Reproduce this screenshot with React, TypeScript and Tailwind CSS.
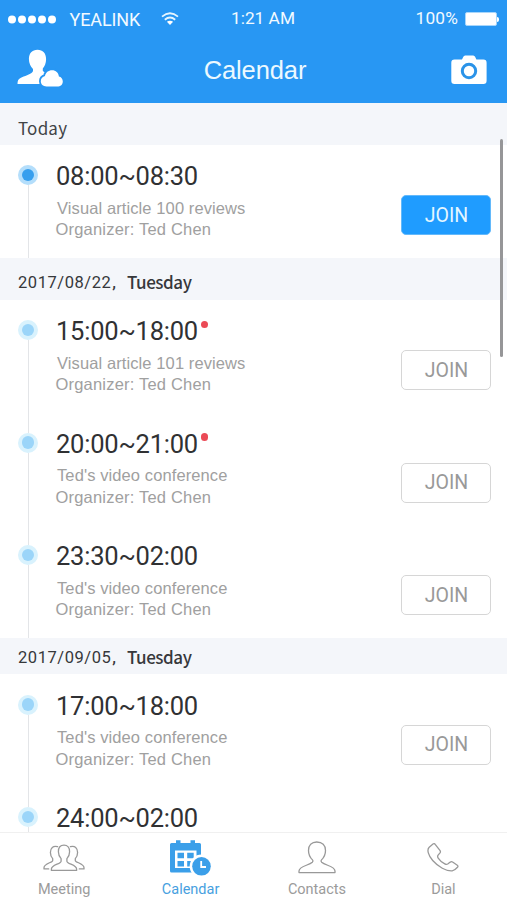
import React from "react";

const roboto = "font-['Roboto','Liberation_Sans',sans-serif]";
const arial = "font-['Liberation_Sans',sans-serif]";
const noto = "font-['Noto_Sans_CJK_SC','Noto_Sans',sans-serif]";

type Meeting = {
  time: string;
  title?: string;
  live?: boolean;
  unread?: boolean;
};

function Wifi() {
  return (
    <svg width="18" height="14" viewBox="0 0 18 14" fill="none" stroke="#e6f6ff">
      <path d="M1 4.6Q9-2 17 4.6" strokeWidth="1.8" />
      <path d="M3.8 7.7Q9 3.4 14.2 7.7" strokeWidth="1.8" />
      <path d="M5.9 9.8Q9 7.6 12.1 9.8L9 13Z" fill="#fff" stroke="none" />
    </svg>
  );
}

function StatusBar() {
  return (
    <div className={`flex h-[38px] items-center text-[#f2faff] ${roboto}`}>
      <svg className="ml-[8px]" width="48" height="9" viewBox="0 0 48 9" fill="#fff">
        <circle cx="4" cy="4.500" r="4" />
        <circle cx="14" cy="4.500" r="4" />
        <circle cx="24" cy="4.500" r="4" />
        <circle cx="34" cy="4.500" r="4" />
        <circle cx="44" cy="4.500" r="4" />
      </svg>
      <span className="ml-[13.5px] mt-[1px] w-[72px] text-[18px] tracking-[-0.1px]">YEALINK</span>
      <span className="ml-[19px] w-[18px]">
        <Wifi />
      </span>
      <span className="ml-[52.5px] w-[66px] text-[17.3px]">1:21 AM</span>
      <span className="ml-[118.5px] w-[44px] text-[17.3px] tracking-[0.2px]">100%</span>
      <span className="ml-[5px] h-[14px] w-[32px] rounded-[2px] border border-[#a8d6fb] bg-white" />
      <span className="h-[5px] w-[2.5px] rounded-r-full bg-white" />
    </div>
  );
}

function Header() {
  return (
    <header className="h-[103px] shrink-0 bg-[#2897f3]">
      <StatusBar />
      <div className="flex h-[65px] items-start justify-between pl-[17px] pr-[20px]">
        <svg className="mt-[11px]" width="46" height="39" viewBox="0 0 46 39">
          <path
            d="M20.5 .8c5.400 0 8.600 3.700 8.600 9.200 0 4.400-1.600 7.600-3.300 9.500v2.300c0 1.200 4.200 1.600 8.200 4.200V35H.5c0-3 .6-4.700 3-5.900 3.900-2 9.600-3.500 12-6 .7-.8.700-2.200.3-3.300-2-1.900-3.900-5.400-3.900-9.800 0-5.500 3.200-9.200 8.600-9.200Z"
            fill="#fff"
          />
          <path
            d="M29.500 37.500h10.700c3.400 0 5.600-2.100 5.600-5.100 0-2.700-1.600-4.500-3.900-5-.6-3.800-3-6.100-6.800-6.100-3.800 0-6.500 2.300-7.100 5.800-2.300.6-4.200 2.400-4.200 5.200 0 3.100 2.200 5.200 5.700 5.200Z"
            fill="#fff"
            stroke="#2897f3"
            strokeWidth="3.600"
            paintOrder="stroke"
          />
        </svg>
        <h1 className={`mr-[4px] mt-[16px] text-[25.5px] leading-[32px] tracking-[-0.1px] text-[#ecf9ff] ${arial}`}>Calendar</h1>
        <svg className="mt-[17px]" width="36" height="30" viewBox="0 0 36 30">
          <path
            d="M3.500 4.500H11l1.200-2.600Q12.800.4 14.200.4h8q1.400 0 2 1.500l1.200 2.600h7q3.200 0 3.200 3.200v18q0 3.200-3.200 3.200H3.500Q.3 28.900.3 25.700v-18q0-3.200 3.200-3.200Z"
            fill="#fff"
          />
          <circle cx="18" cy="16" r="6.700" fill="#fff" stroke="#2b93e8" strokeWidth="3" />
        </svg>
      </div>
    </header>
  );
}

function Today() {
  return (
    <div className={`flex h-[42px] shrink-0 items-center bg-[#f4f6fa] pl-[18px] pt-[8px] text-[17px] tracking-[0.2px] text-[#414346] ${noto}`}>
      Today
    </div>
  );
}

function DateBar({ date, day, tall }: { date: string; day: string; tall?: boolean }) {
  return (
    <div className={`flex shrink-0 items-center bg-[#f4f6fa] pl-[18px] text-[#36383b] ${tall ? "h-[42px] pt-[8px]" : "h-[36px] pt-[4px]"}`}>
      <span className={`w-[109px] whitespace-nowrap text-[16.500px] leading-[20px] tracking-[0.550px] ${roboto}`}>
        {date}
        <span className="ml-[1px] font-medium">,</span>
      </span>
      <span className={`-mt-[2px] text-[17px] font-medium leading-[24px] tracking-[-0.450px] ${noto}`}>{day}</span>
    </div>
  );
}

function MeetingRow({ time, title, live, unread, first }: Meeting & { first: boolean }) {
  return (
    <div className={`flex ${title ? "min-h-[112.600px]" : ""}`}>
      <div className="ml-[18px] flex w-[20px] flex-col items-center">
        <div className={`h-[20px] w-[1px] ${first ? "" : "bg-[#e3e5e8]"}`} />
        <span className={`flex h-[20px] w-[20px] shrink-0 items-center justify-center rounded-full ${live ? "bg-[#b4defb]" : "bg-[#d9f2fd]"}`}>
          <span className={`h-[12.500px] w-[12.500px] rounded-full ${live ? "bg-[#379fee]" : "bg-[#9bd5f9]"}`} />
        </span>
        <div className="w-[1px] flex-1 bg-[#e3e5e8]" />
      </div>
      <div className="ml-[18px] flex-1 pt-[16px]">
        <div className={`flex h-[30px] text-[25.500px] leading-[31px] tracking-[-0.220px] text-[#303133] ${roboto}`}>
          {time}
          {unread && <span className="ml-[3px] mt-[4.500px] h-[7.500px] w-[7.500px] rounded-full bg-[#eb4a56]" />}
        </div>
        {title && (
          <>
            <p className={`ml-[1px] mt-[6.700px] text-[16.500px] leading-[21.500px] tracking-[0.100px] text-[#a0a0a0] ${arial}`}>{title}</p>
            <p className={`-ml-[0.500px] text-[16.500px] leading-[21.500px] tracking-[0.200px] text-[#a0a0a0] ${arial}`}>Organizer: Ted Chen</p>
          </>
        )}
      </div>
      {title && (
        <button
          className={`mr-[16px] mt-[50px] flex h-[40px] w-[90px] items-center justify-center rounded-[5px] pl-[1px] pt-[1px] text-[19.500px] ${roboto} ${
            live ? "border border-[#63b9fb] bg-[#1f9cff] text-[#e4f6ff]" : "border-[1.500px] border-[#d6d6d6] bg-white text-[#999]"
          }`}
        >
          JOIN
        </button>
      )}
    </div>
  );
}

const today: Meeting[] = [{ time: "08:00~08:30", title: "Visual article 100 reviews", live: true }];

const august: Meeting[] = [
  { time: "15:00~18:00", title: "Visual article 101 reviews", unread: true },
  { time: "20:00~21:00", title: "Ted's video conference", unread: true },
  { time: "23:30~02:00", title: "Ted's video conference" },
];

const september: Meeting[] = [
  { time: "17:00~18:00", title: "Ted's video conference" },
  { time: "24:00~02:00" },
];

function Agenda({ items, className }: { items: Meeting[]; className: string }) {
  return (
    <div className={className}>
      {items.map((m, i) => (
        <MeetingRow key={m.time} first={i === 0} {...m} />
      ))}
    </div>
  );
}

function MeetingIcon() {
  return (
    <svg width="42" height="28" viewBox="0 0 42 28" fill="none" stroke="#999" strokeWidth="1.300" strokeLinejoin="round" strokeLinecap="round">
      <path d="M21 1.200c-3.600 0-5.600 2.600-5.600 6.500 0 3 1.200 5.300 2.700 6.900v2.600c0 2.800-9.700 3.500-9.700 7.800v1.400h25.200v-1.400c0-4.300-9.700-5-9.700-7.800v-2.600c1.500-1.600 2.700-3.900 2.700-6.900 0-3.900-2-6.500-5.600-6.500Z" />
      <path d="M14.600 2.700c-4.500-1.300-7.200 1.300-7.200 5.800 0 2.400.8 4.500 2.300 6.100v1.800C9.700 18.500 1 19.500 1 23.700v1.200h4.700" />
      <path d="M27.400 2.700c4.500-1.300 7.200 1.300 7.200 5.800 0 2.400-.8 4.500-2.300 6.100v1.800c0 2.100 8.700 3.100 8.700 7.300v1.200h-4.700" />
    </svg>
  );
}

function CalendarIcon() {
  return (
    <svg width="42" height="37" viewBox="0 0 42 37">
      <path d="M1.500 4H6V1.200h4.500V4h10V1.200H25V4h4.500Q31 4 31 5.500V33.500H1.500Q0 33.500 0 32V5.500Q0 4 1.500 4Z" fill="#3b9fe9" />
      <path d="M5 11.500h21.500v17.500H5Z" fill="#fff" />
      <path d="M7.500 13.800h6.500v5.500H7.500ZM17.200 13.800h6.500v5.500h-6.500ZM7.500 22h6.500v5.500H7.500ZM17.200 22h6.500v5.500h-6.500Z" fill="#3b9fe9" />
      <circle cx="31.500" cy="27.300" r="11.800" fill="#fff" />
      <circle cx="31.500" cy="27.300" r="9.300" fill="#3b9fe9" />
      <path d="M31.200 22v6h4.800" fill="none" stroke="#fff" strokeWidth="1.800" />
    </svg>
  );
}

function ContactsIcon() {
  return (
    <svg width="38" height="33" viewBox="0 0 38 33" fill="none" stroke="#999" strokeWidth="1.300" strokeLinejoin="round">
      <path d="M18.700 1c-5 0-8.200 3.400-8.200 8.400 0 4.300 1.800 7.300 4 9.500.5.500.4 1.800-.2 2.400-3.500 3.300-13.300 3.700-13.300 8.800v1.500h36v-1.500c0-5.100-9.800-5.500-13.300-8.800-.6-.6-.7-1.900-.2-2.400 2.200-2.200 4-5.200 4-9.500 0-5-3.200-8.400-8.800-8.400Z" />
    </svg>
  );
}

function DialIcon() {
  return (
    <svg width="32" height="29" viewBox="0 0 32 29" fill="none" stroke="#999" strokeWidth="1.300" strokeLinejoin="round">
      <path d="M6 1 2.200 4.200C-.4 6.600 1.300 12.500 5.700 17.500c5.500 6.300 13.600 10.800 19.500 10.300 1.900-.2 3.500-1.600 5.300-3.600.7-.8.600-1.400-.2-2l-4.700-3.200c-.8-.6-1.500-.4-2.300.1l-2.600 1.900c-.8.500-1.700.5-2.900-.1-2.700-1.300-5-3.400-6.600-5.800-.8-1.200-.7-2.100-.1-2.900l1.900-2.300c.6-.8.600-1.500.1-2.300L8.200 1.400C7.600.6 6.800.4 6 1Z" />
    </svg>
  );
}

function Tab({ label, active, children }: { label: string; active?: boolean; children: React.ReactNode }) {
  return (
    <div className="flex w-[126.400px] flex-col items-center">
      <div className="flex h-[47px] items-start">{children}</div>
      <span className={`text-[14.500px] leading-[19px] ${roboto} ${active ? "text-[#479fe0]" : "text-[#9b9b9b]"}`}>{label}</span>
    </div>
  );
}

export default function App() {
  return (
    <div className="relative flex h-[900px] w-[507px] flex-col overflow-hidden bg-white">
      <Header />
      <main className="flex h-[729px] shrink-0 flex-col overflow-hidden">
        <Today />
        <Agenda items={today} className="h-[113px] shrink-0 overflow-hidden" />
        <DateBar date="2017/08/22" day="Tuesday" tall />
        <Agenda items={august} className="h-[338px] shrink-0" />
        <DateBar date="2017/09/05" day="Tuesday" />
        <Agenda items={september} className="flex-1 pt-[0.500px]" />
      </main>
      <nav className="flex h-[68px] shrink-0 border-t-[1.500px] border-[#f0f0f0] bg-white pl-[1px]">
        <Tab label="Meeting">
          <span className="mt-[11px]"><MeetingIcon /></span>
        </Tab>
        <Tab label="Calendar" active>
          <span className="mt-[6px]"><CalendarIcon /></span>
        </Tab>
        <Tab label="Contacts">
          <span className="mt-[8px]"><ContactsIcon /></span>
        </Tab>
        <Tab label="Dial">
          <span className="mt-[10px]"><DialIcon /></span>
        </Tab>
      </nav>
      <div className="absolute left-[500px] top-[139px] h-[218px] w-[3px] rounded-full bg-[#969698]" />
    </div>
  );
}
